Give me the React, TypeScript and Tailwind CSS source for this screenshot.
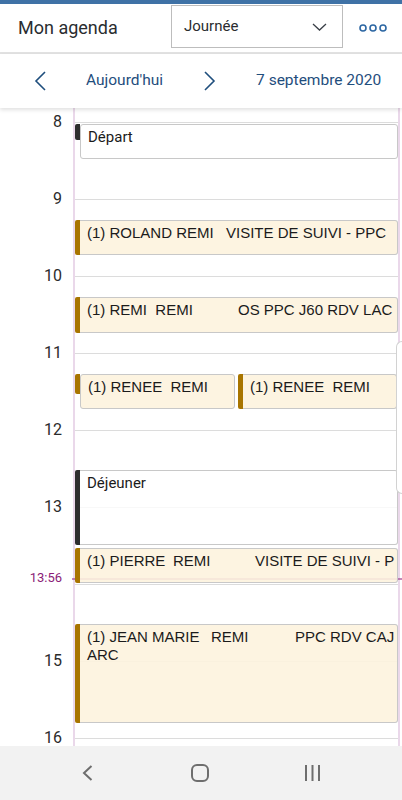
import React from "react";

type Ev = {
  top: number;
  h: number;
  left: number;
  w?: number;
  barH?: number;
  dark?: boolean;
  lines: React.ReactNode;
};

const hours = [8, 9, 10, 11, 12, 13, 14, 15, 16];

const events: Ev[] = [
  { top: 16, h: 35, left: 0, barH: 16, dark: true, lines: "Départ" },
  {
    top: 112,
    h: 35,
    left: 0,
    lines: (
      <>
        <span className="inline-block w-[139px]">(1) ROLAND REMI</span>VISITE DE SUIVI - PPC
      </>
    ),
  },
  {
    top: 189,
    h: 36,
    left: 0,
    lines: (
      <>
        <span className="inline-block w-[151px]">(1) REMI&nbsp; REMI</span>OS PPC J60 RDV LAC
      </>
    ),
  },
  { top: 266, h: 35, left: 0, w: 160, barH: 20, lines: "(1) RENEE\u00a0 REMI" },
  { top: 266, h: 35, left: 163, w: 159, lines: "(1) RENEE\u00a0 REMI" },
  { top: 362, h: 75, left: 0, dark: true, lines: "Déjeuner" },
  {
    top: 440,
    h: 35,
    left: 0,
    lines: (
      <>
        <span className="inline-block w-[86px]">(1) PIERRE</span>
        <span className="inline-block w-[82px]">REMI</span>VISITE DE SUIVI - P
      </>
    ),
  },
  {
    top: 516,
    h: 99,
    left: 0,
    lines: (
      <>
        <span className="inline-block w-[124px]">(1) JEAN MARIE</span>
        <span className="inline-block w-[84px]">REMI</span>PPC RDV CAJ
        <br />
        ARC
      </>
    ),
  },
];

function EventBox({ ev }: { ev: Ev }) {
  const full = ev.barH === undefined;
  return (
    <div
      className="absolute flex"
      style={{ top: ev.top, height: ev.h, left: ev.left, width: ev.w, right: ev.w ? undefined : 0 }}
    >
      <div
        className={`w-[5px] shrink-0 rounded-l-[2px] ${ev.dark ? "bg-[#2e2e2e]" : "bg-[#a87500]"}`}
        style={{ height: ev.barH ?? ev.h }}
      />
      <div
        className={`flex-1 min-w-0 overflow-hidden whitespace-nowrap border border-[#c8c8c8] rounded-r-[3px] pl-[7px] pt-[3px] leading-[18px] text-[#1b1b1b] ${
          full ? "border-l-0" : "rounded-l-[3px]"
        } ${
          ev.dark
            ? "bg-white/80 font-['Roboto',sans-serif] text-[15px]"
            : "bg-[#fdf3de]/90 font-['Liberation_Sans',Arial,sans-serif] text-[15px]"
        }`}
      >
        {ev.lines}
      </div>
    </div>
  );
}

function Chevron({ dir }: { dir: "l" | "r" }) {
  return (
    <svg width="12" height="20" viewBox="0 0 12 20" fill="none" stroke="#1f4e7d" strokeWidth="1.6">
      <path d={dir === "l" ? "M11 1 L2 10 L11 19" : "M1 1 L10 10 L1 19"} />
    </svg>
  );
}

export default function App() {
  return (
    <div className="w-[402px] h-[800px] flex flex-col bg-white font-['Roboto',sans-serif] overflow-hidden">
      <div className="h-[4px] bg-[#3f72a6]" />

      {/* Header */}
      <div className="h-[48px] flex">
        <div className="w-[171px] pl-[18px] flex items-center text-[18px] text-[#2a2d30]">Mon agenda</div>
        <div className="mt-[1px] w-[172px] h-[43px] border border-[#bdbdbd] flex items-center justify-between pl-[12px] pr-[15px] text-[15px] text-[#2a2d30]">
          <span>Journée</span>
          <svg width="15" height="8" viewBox="0 0 15 8" fill="none" stroke="#3a4048" strokeWidth="1.3">
            <path d="M1 1 L7.5 7 L14 1" />
          </svg>
        </div>
        <div className="flex-1 flex items-center justify-center">
          <svg width="28" height="8" viewBox="0 0 28 8" fill="none" stroke="#2d67a3" strokeWidth="1.6">
            <circle cx="4" cy="4" r="3" />
            <circle cx="14" cy="4" r="3" />
            <circle cx="24" cy="4" r="3" />
          </svg>
        </div>
      </div>
      <div className="h-[2px] bg-[#e2e2e2]" />

      {/* Date navigation */}
      <div className="relative z-10 h-[54px] flex items-center pl-[34px] text-[15.5px] text-[#1f4e7d] shadow-[0_2px_4px_rgba(0,0,0,0.12)]">
        <Chevron dir="l" />
        <span className="ml-[40px]">Aujourd'hui</span>
        <span className="ml-[41px] flex">
          <Chevron dir="r" />
        </span>
        <span className="ml-[40px]">7 septembre 2020</span>
      </div>

      {/* Timeline */}
      <div className="relative h-[639px] flex overflow-hidden">
        <div className="relative w-[73px] pt-[14px] text-[16px] text-[#2b2b2b]">
          {hours.map((h) => (
            <div key={h} className="h-[77px]">
              {h !== 14 && <div className="-translate-y-1/2 text-right pr-[11px] leading-[20px]">{h}</div>}
            </div>
          ))}
          <div className="absolute right-[11px] top-[461px] text-[13px] leading-[18px] text-[#8b1c78]">13:56</div>
        </div>

        <div className="relative flex-1 mr-[2px] border-x-2 border-[#ead8ea] pt-[14px]">
          {hours.map((h) => (
            <div key={h} className="h-[77px] border-t border-[#dcdcdc]" />
          ))}
          <div className="absolute left-[-3px] right-[-4px] top-[470px] h-[2px] bg-[#9b3a8a]/60" />
          {events.map((ev, i) => (
            <EventBox key={i} ev={ev} />
          ))}
        </div>

        <div className="absolute right-0 top-[233px] w-[6px] h-[153px] bg-white border border-r-0 border-[#d2d2d2] rounded-l-[6px]" />
      </div>

      {/* Android nav bar */}
      <div className="h-[54px] bg-[#f2f2f2] flex items-center pl-[82px]">
        <svg width="11" height="16" viewBox="0 0 11 16" fill="none" stroke="#6e6e6e" strokeWidth="2">
          <path d="M9.5 1 L2 8 L9.5 15" />
        </svg>
        <svg className="ml-[98px]" width="18" height="18" viewBox="0 0 18 18" fill="none" stroke="#6e6e6e" strokeWidth="2">
          <rect x="1" y="1" width="16" height="16" rx="5" />
        </svg>
        <svg className="ml-[95px]" width="17" height="16" viewBox="0 0 17 16" fill="none" stroke="#6e6e6e" strokeWidth="2">
          <path d="M2 0 V16 M8.5 0 V16 M15 0 V16" />
        </svg>
      </div>
    </div>
  );
}
